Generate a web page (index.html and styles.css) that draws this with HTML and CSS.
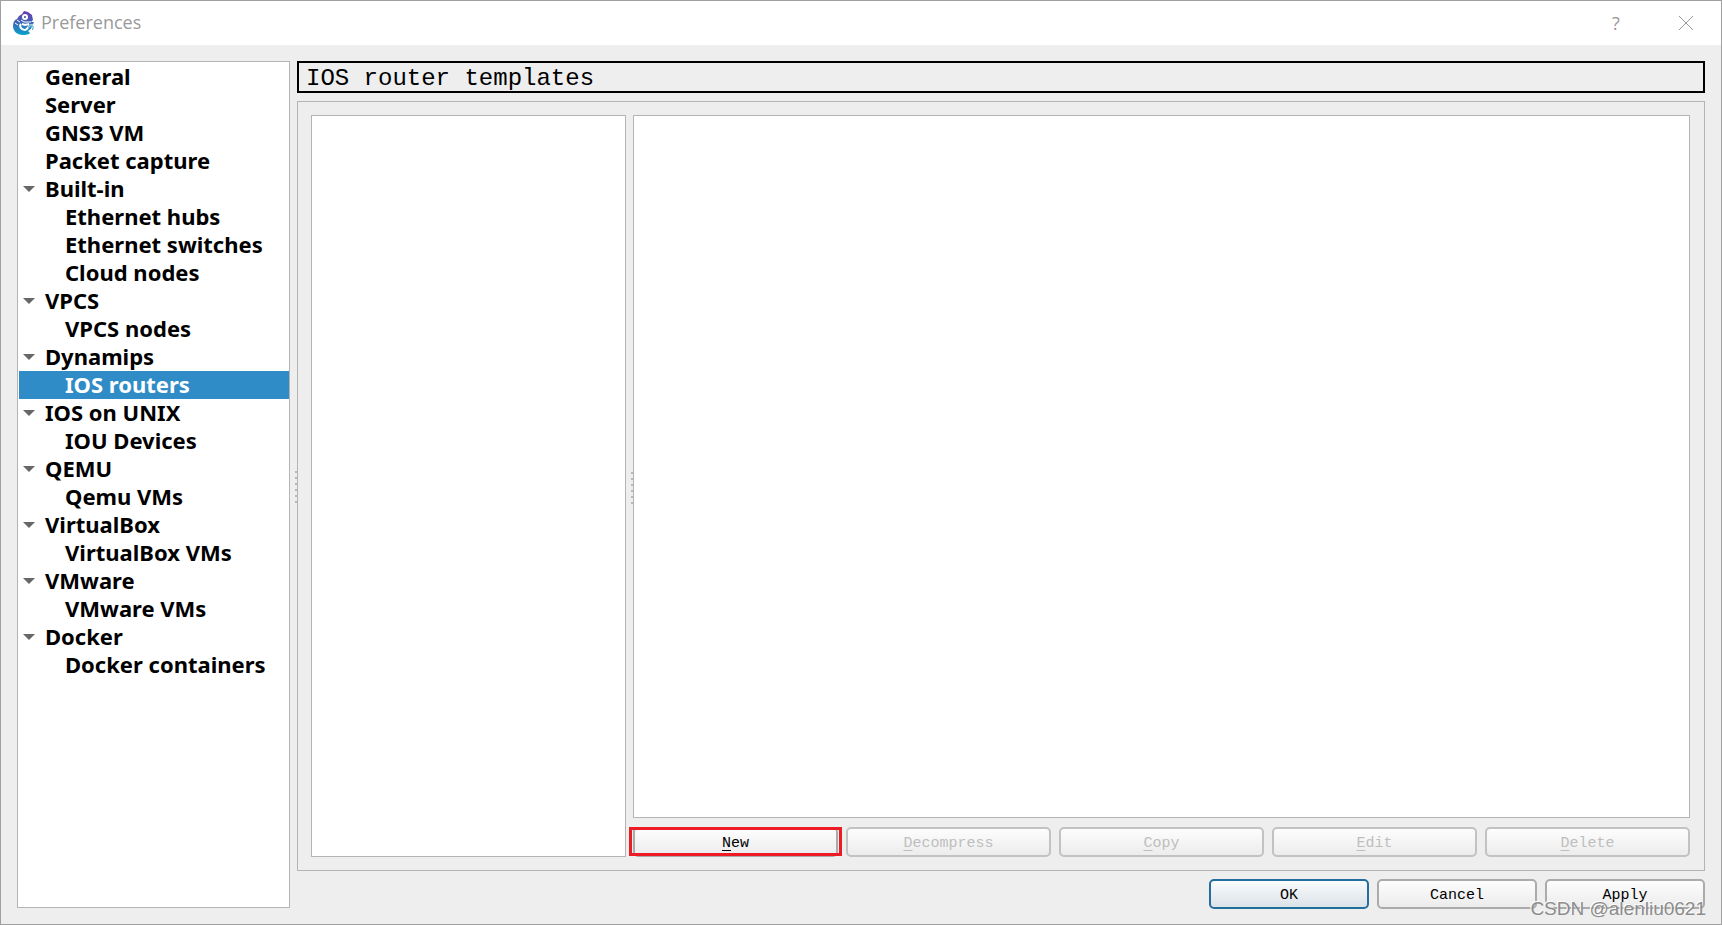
FILE: index.html
```html
<!DOCTYPE html>
<html lang="en">
<head>
  <meta charset="UTF-8">
  <meta name="viewport" content="width=device-width, initial-scale=1.0">
  <title>Preferences</title>
  <link rel="stylesheet" href="styles.css">
</head>
<body>
  <header class="titlebar">
    <svg class="logo" viewBox="0 0 22 24" aria-hidden="true">
      <defs>
        <linearGradient id="skin" x1="0" y1="0" x2="0" y2="1">
          <stop offset="0" stop-color="#7038b0"/>
          <stop offset="0.45" stop-color="#4062b8"/>
          <stop offset="1" stop-color="#08a3c8"/>
        </linearGradient>
      </defs>
      <path fill="url(#skin)" d="M9 3L11 0L15 1L19 4L20 9L18 11L21 11L20 13L20 19C18 23 14 24 10 24C4 24 0 20 0 15C0 12 1 9 4 8L6 5Z"/>
      <circle cx="12" cy="6" r="3" fill="#fff"/>
      <circle cx="12" cy="6" r="1" fill="#3f4f90"/>
      <path fill="none" stroke="#fff" stroke-width="1" d="M2 12L5 14M4 9L7 11M8 9L11 11L18 11"/>
      <path fill="none" stroke="#fff" stroke-width="2" d="M8 13C6 15 8 19 12 19C15 19 15 14 18 14C21 14 20 18 18 18M9 13L12 14L16 13"/>
      <path fill="#fff" d="M15 20L22 15L22 20L18 23Z"/>
      <path fill="none" stroke="#1997c4" stroke-width="1" d="M19 19C21 17 20 14 18 14C15 14 15 18 18 17"/>
    </svg>
    <h1>Preferences</h1>
    <button class="window-button" aria-label="Help">?</button>
    <button class="window-button" aria-label="Close">
      <svg viewBox="0 0 16 16" width="16" height="16"><path d="M1 1L15 15M15 1L1 15" stroke="#999" fill="none"/></svg>
    </button>
  </header>

  <main>
    <!-- Page tree -->
    <nav class="tree">
      <a href="#general">General</a>
      <a href="#server">Server</a>
      <a href="#gns3-vm">GNS3 VM</a>
      <a href="#capture">Packet capture</a>
      <details open>
        <summary>Built-in</summary>
        <a href="#hubs">Ethernet hubs</a>
        <a href="#switches">Ethernet switches</a>
        <a href="#clouds">Cloud nodes</a>
      </details>
      <details open>
        <summary>VPCS</summary>
        <a href="#vpcs">VPCS nodes</a>
      </details>
      <details open>
        <summary>Dynamips</summary>
        <a href="#ios" class="selected">IOS routers</a>
      </details>
      <details open>
        <summary>IOS on UNIX</summary>
        <a href="#iou">IOU Devices</a>
      </details>
      <details open>
        <summary>QEMU</summary>
        <a href="#qemu">Qemu VMs</a>
      </details>
      <details open>
        <summary>VirtualBox</summary>
        <a href="#virtualbox">VirtualBox VMs</a>
      </details>
      <details open>
        <summary>VMware</summary>
        <a href="#vmware">VMware VMs</a>
      </details>
      <details open>
        <summary>Docker</summary>
        <a href="#docker">Docker containers</a>
      </details>
    </nav>
    <div class="splitter"><i></i><i></i><i></i><i></i><i></i><i></i></div>

    <!-- Selected page -->
    <div class="content">
      <h2>IOS router templates</h2>
      <section class="group">
        <div class="template-list"></div>
        <div class="splitter"><i></i><i></i><i></i><i></i><i></i><i></i></div>
        <div class="details">
          <div class="template-info"></div>
          <div class="actions">
            <button class="new"><u>N</u>ew</button>
            <button disabled><u>D</u>ecompress</button>
            <button disabled><u>C</u>opy</button>
            <button disabled><u>E</u>dit</button>
            <button disabled><u>D</u>elete</button>
          </div>
        </div>
      </section>
      <div class="dialog-buttons">
        <button class="default">OK</button>
        <button>Cancel</button>
        <button>Apply</button>
      </div>
    </div>
  </main>
  <p class="watermark">CSDN @alenliu0621</p>
</body>
</html>
```
FILE: styles.css
```css
* {
  box-sizing: border-box;
}
body {
  margin: 0;
  height: 100vh;
  display: flex;
  flex-direction: column;
  background: #eee;
  border: 1px solid #a0a0a0;
  color: #000;
  font-family: "Liberation Mono", monospace;
  position: relative;
  overflow: hidden;
}
.titlebar {
  display: flex;
  align-items: center;
  height: 44px;
  padding-left: 12px;
  background: #fff;
}
.logo {
  width: 22px;
  height: 24px;
}
h1 {
  flex: 1;
  margin: 0 0 0 6px;
  padding-bottom: 2px;
  font: 18px "Open Sans", sans-serif;
  color: #999;
}
.window-button {
  width: 70px;
  height: 44px;
  padding: 0;
  border: none;
  background: none;
  font: 18px "Open Sans", sans-serif;
  color: #999;
}
.window-button svg {
  display: block;
  margin: auto;
}
main {
  flex: 1;
  display: flex;
  min-height: 0;
  padding: 16px 16px 15px;
}
.tree {
  width: 273px;
  margin-bottom: 1px;
  padding: 1px 0 0 1px;
  background: #fff;
  border: 1px solid #b4b4b4;
  font: bold 22px "Noto Sans", sans-serif;
}
.tree a,
.tree summary {
  display: flex;
  align-items: center;
  height: 28px;
  padding-left: 26px;
  padding-bottom: 2px;
  color: #000;
  text-decoration: none;
  white-space: nowrap;
}
.tree details a {
  padding-left: 46px;
}
.tree summary {
  padding-left: 4px;
  cursor: pointer;
}
/* Expand arrow */
.tree summary::before {
  content: "";
  margin-top: 2px;
  margin-right: 10px;
  border: 6px solid transparent;
  border-top-color: #666;
  border-bottom: none;
}
.tree .selected {
  background: #308cc6;
  color: #fff;
}
.splitter {
  display: flex;
  flex-direction: column;
  align-items: flex-end;
  justify-content: center;
  gap: 4px;
  width: 7px;
  padding-top: 4px;
  cursor: col-resize;
}
.splitter i {
  width: 2px;
  height: 2px;
  background: #b8b8b8;
}
.content {
  flex: 1;
  display: flex;
  flex-direction: column;
  min-width: 0;
}
h2 {
  height: 32px;
  margin: 0 0 8px;
  padding-left: 7px;
  border: 2px solid #000;
  font-size: 24px;
  font-weight: normal;
  line-height: 32px;
}
.group {
  flex: 1;
  display: flex;
  padding: 13px 14px 13px 13px;
  border: 1px solid #b4b4b4;
}
.template-list {
  width: 315px;
}
.details {
  flex: 1;
  display: flex;
  flex-direction: column;
  gap: 9px;
  min-width: 0;
}
.template-info {
  flex: 1;
}
.template-list,
.template-info {
  background: #fff;
  border: 1px solid #b4b4b4;
}
.actions {
  display: grid;
  grid-template-columns: repeat(5, 1fr);
  gap: 8px;
}
.actions button,
.dialog-buttons button {
  height: 30px;
  padding: 2px 0 0;
  border: 2px solid #ababab;
  border-radius: 5px;
  background: linear-gradient(#fdfdfd, #ececec);
  font: 15px "Liberation Mono", monospace;
  color: #000;
}
.actions button:disabled {
  border-color: #c2c2c2;
  color: #bebebe;
}
.actions u {
  text-underline-offset: 3px;
}
/* Highlight frame around New */
.actions .new {
  position: relative;
}
.new::after {
  content: "";
  position: absolute;
  inset: -2px -6px -1px;
  border: 3px solid #ed1c24;
}
.dialog-buttons {
  display: flex;
  justify-content: flex-end;
  gap: 8px;
  margin-top: 8px;
}
.dialog-buttons button {
  width: 160px;
}
.dialog-buttons .default {
  border-color: #226e9e;
  background: linear-gradient(#fafcfd, #dbe2e8);
}
.watermark {
  position: absolute;
  right: 15px;
  bottom: 4px;
  margin: 0;
  font: 19px "Liberation Sans", sans-serif;
  color: #8c8c8c;
  text-shadow: -1px -1px 0 #fff;
  pointer-events: none;
}
```
